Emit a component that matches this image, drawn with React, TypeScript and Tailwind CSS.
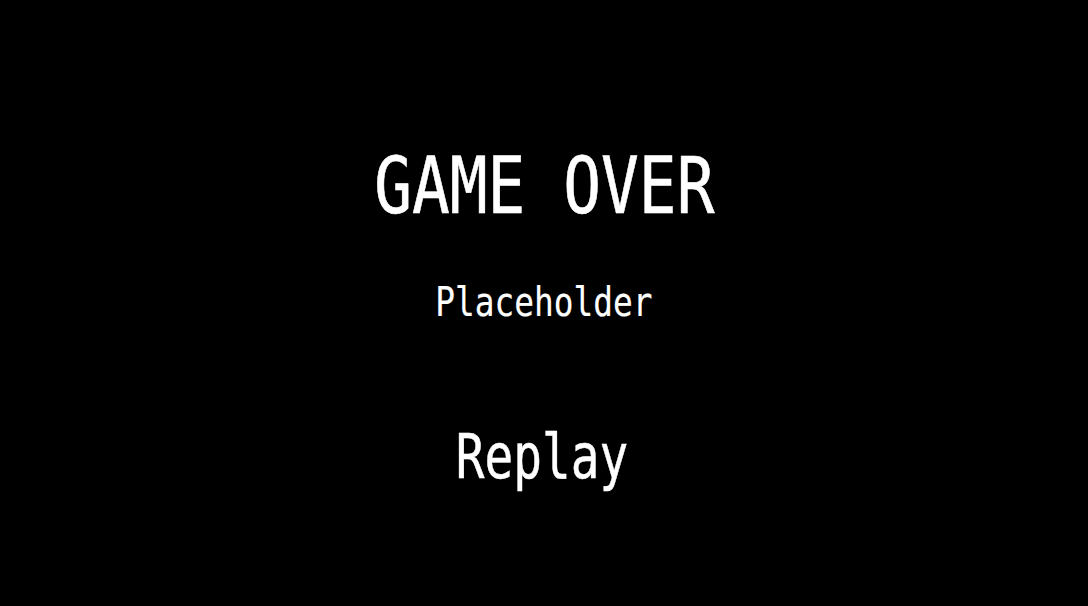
export default function App() {
  return (
    <div className="flex h-[606px] w-full flex-col items-center bg-black pt-[147px] text-white [font-family:'DejaVu_Sans_Mono',monospace]">
      <h1 className="inline-block scale-x-[0.805] text-[78px] font-normal leading-none [-webkit-text-stroke:0.6px_white]">
        GAME OVER
      </h1>
      <p className="mt-[57px] inline-block scale-x-[0.8] text-[41px] leading-none [-webkit-text-stroke:0.2px_white]">
        Placeholder
      </p>
      <button className="mt-[103px] inline-block -translate-x-[2px] scale-x-[0.77] cursor-pointer text-[62px] leading-none [-webkit-text-stroke:0.5px_white]">
        Replay
      </button>
    </div>
  );
}
